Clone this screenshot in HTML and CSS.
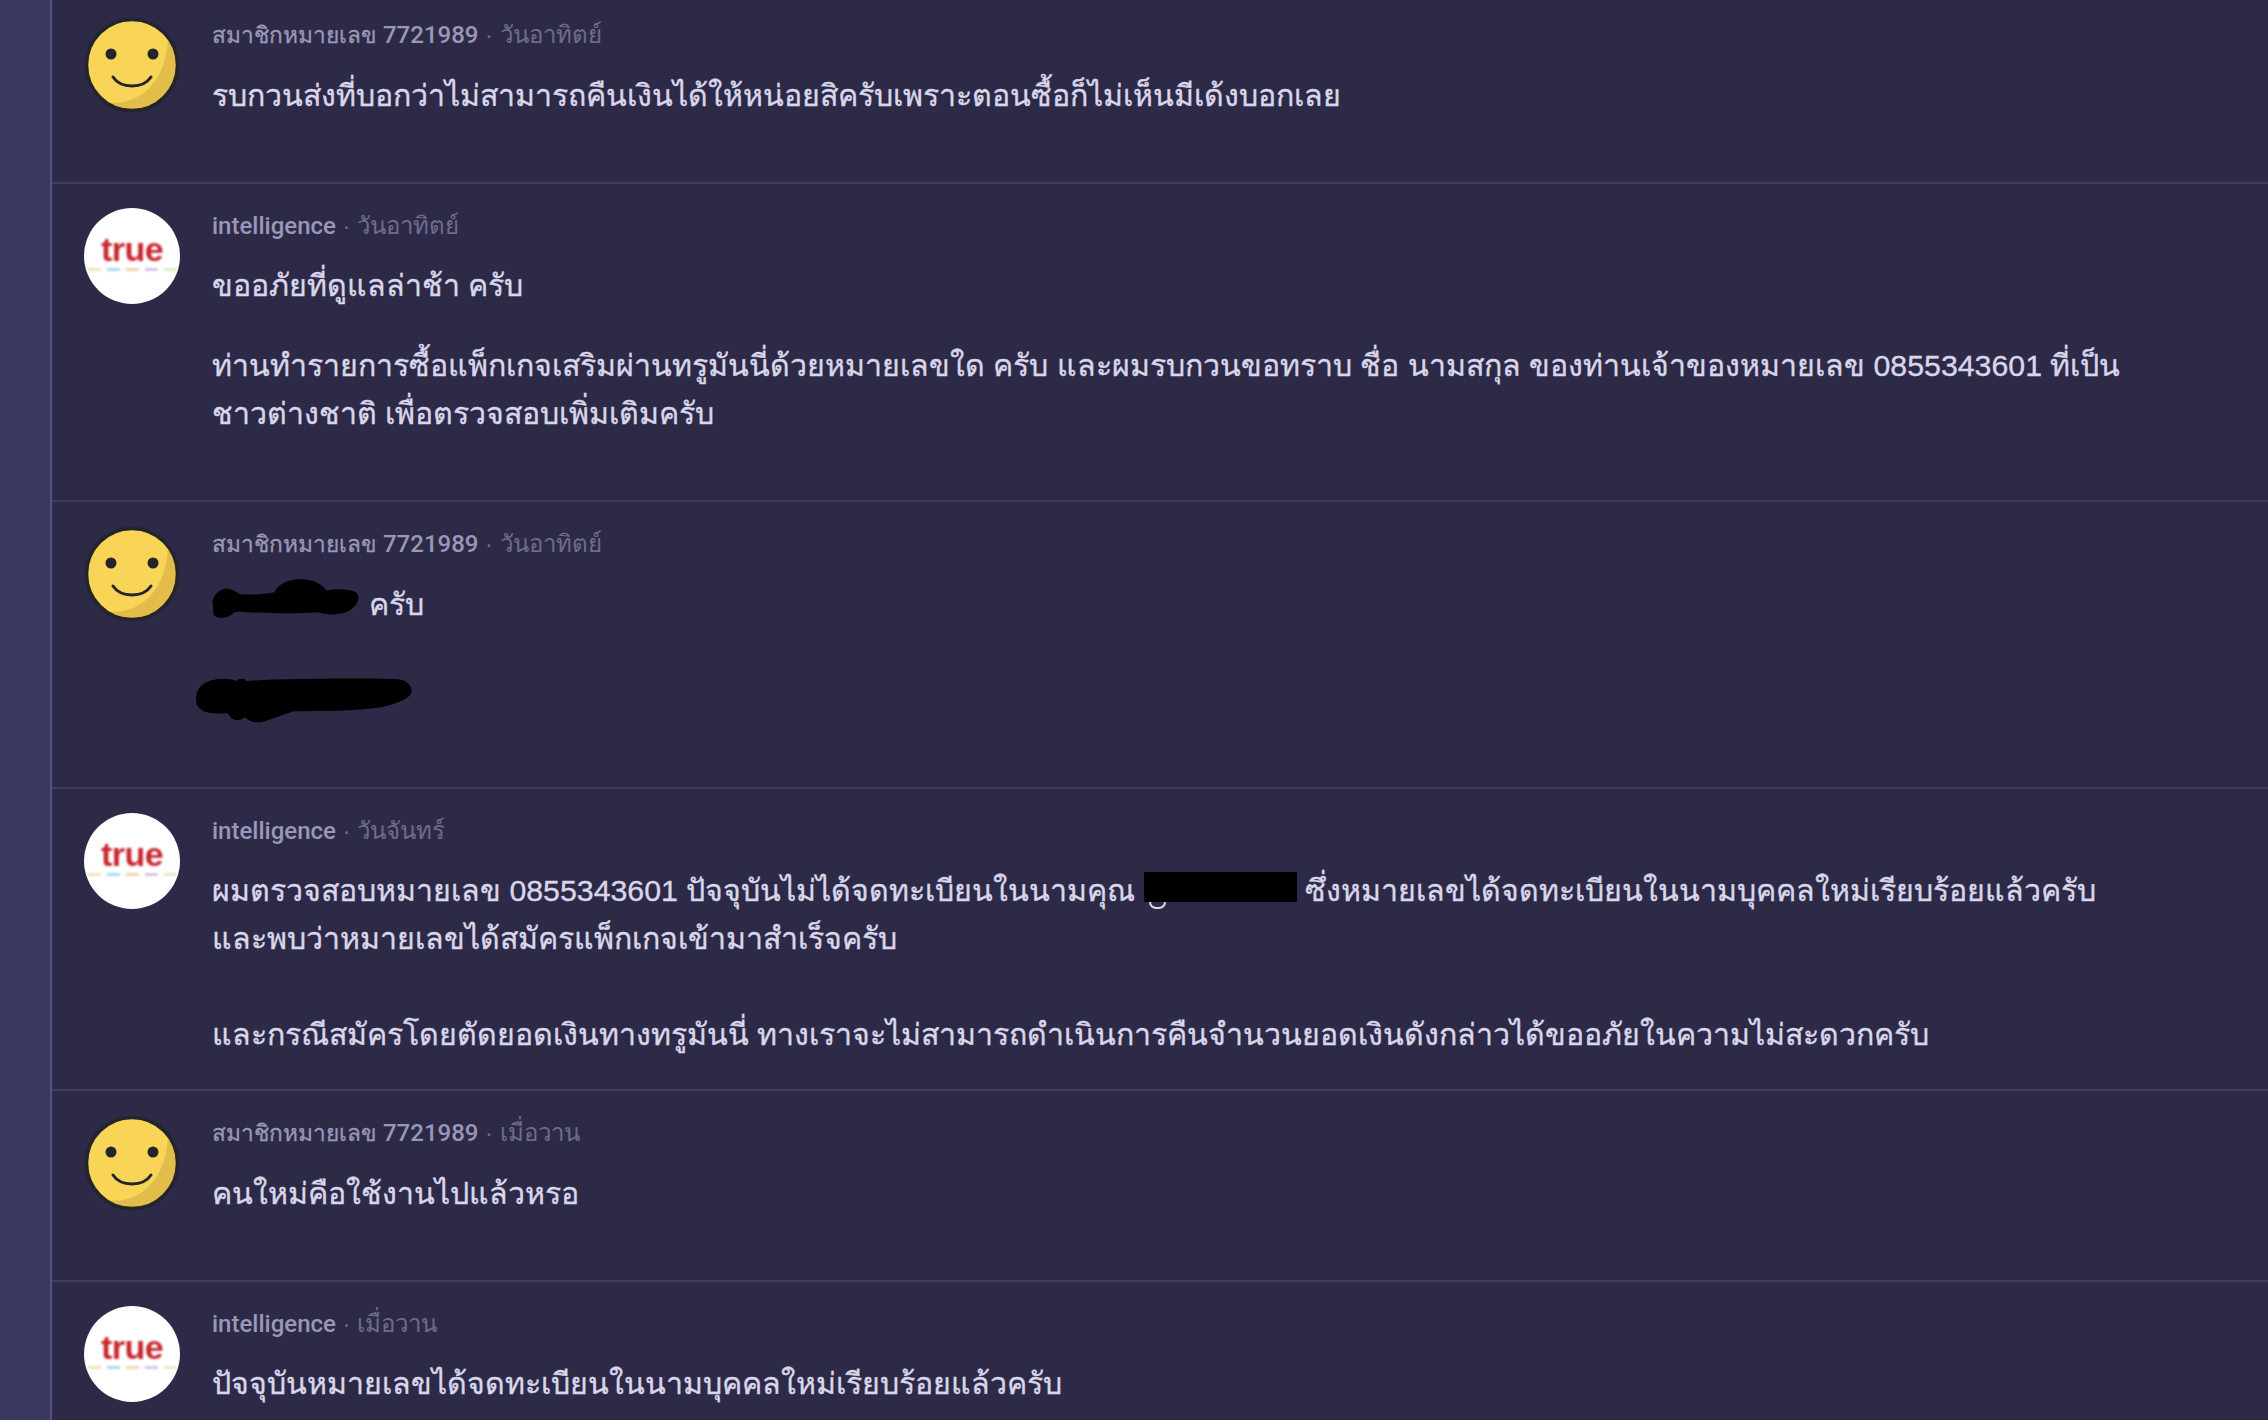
FILE: index.html
```html
<!DOCTYPE html>
<html lang="th">
<head>
    <meta charset="UTF-8">
    <meta name="viewport" content="width=device-width, initial-scale=1.0">
    <title>Comments</title>
    <link rel="stylesheet" href="styles.css">
</head>
<body>
    <div class="page">
        <div class="rail"></div>
        <div class="thread">
            <!-- member -->
            <div class="comment">
                <div class="avatar">
                    <svg class="smiley" viewBox="0 0 96 96"><use href="#smile"></use></svg>
                </div>
                <div class="content">
                    <div class="meta"><span class="author"><span class="author-th">สมาชิกหมายเลข</span> 7721989</span> · วันอาทิตย์</div>
                    <p>รบกวนส่งที่บอกว่าไม่สามารถคืนเงินได้ให้หน่อยสิครับเพราะตอนซื้อก็ไม่เห็นมีเด้งบอกเลย</p>
                </div>
            </div>

            <!-- staff -->
            <div class="comment">
                <div class="avatar true-logo">
                    <span class="true-word">true</span>
                    <span class="true-dots"><i class="d1"></i><i class="d2"></i><i class="d3"></i><i class="d4"></i><i class="d5"></i></span>
                </div>
                <div class="content">
                    <div class="meta"><span class="author">intelligence</span> · วันอาทิตย์</div>
                    <p>ขออภัยที่ดูแลล่าช้า ครับ</p>
                    <p>ท่านทำรายการซื้อแพ็กเกจเสริมผ่านทรูมันนี่ด้วยหมายเลขใด ครับ และผมรบกวนขอทราบ ชื่อ นามสกุล ของท่านเจ้าของหมายเลข 0855343601 ที่เป็นชาวต่างชาติ เพื่อตรวจสอบเพิ่มเติมครับ</p>
                </div>
            </div>

            <!-- member, redacted -->
            <div class="comment">
                <div class="avatar">
                    <svg class="smiley" viewBox="0 0 96 96"><use href="#smile"></use></svg>
                </div>
                <div class="content">
                    <div class="meta"><span class="author"><span class="author-th">สมาชิกหมายเลข</span> 7721989</span> · วันอาทิตย์</div>
                    <p><span class="scribble scribble-a"><svg viewBox="0 0 120 44" width="168" height="42" preserveAspectRatio="none"><path d="M3 30C1 22 6 12 12 11C16 11 19 14 22 17C30 18 40 17 47 15C48 8 56 1 66 1C74 2 80 5 84 13C90 11 100 11 105 15C109 20 106 30 98 36C92 39 84 39 78 36C62 38 44 37 28 36C24 35 20 35 18 36C14 43 6 44 3 38Z"></path></svg></span> ครับ</p>
                    <p class="scribble-line"><span class="scribble scribble-b"><svg viewBox="0 0 164 46" width="217" height="45" preserveAspectRatio="none"><path d="M0 22C0 8 8 1 20 1C24 1 28 1 30 3C33 0 37 0 38 3C60 1 110 0 150 1C160 1 163 8 163 14C162 20 155 25 140 30C120 34 95 34 74 34C66 37 58 42 50 45C44 46 40 44 37 40C33 44 29 44 26 40C25 37 24 36 22 36C8 37 0 34 0 22Z"></path></svg></span></p>
                </div>
            </div>

            <!-- staff -->
            <div class="comment">
                <div class="avatar true-logo">
                    <span class="true-word">true</span>
                    <span class="true-dots"><i class="d1"></i><i class="d2"></i><i class="d3"></i><i class="d4"></i><i class="d5"></i></span>
                </div>
                <div class="content">
                    <div class="meta"><span class="author">intelligence</span> · วันจันทร์</div>
                    <p class="last">ผมตรวจสอบหมายเลข 0855343601 ปัจจุบันไม่ได้จดทะเบียนในนามคุณ <span class="blackout"></span> ซึ่งหมายเลขได้จดทะเบียนในนามบุคคลใหม่เรียบร้อยแล้วครับ และพบว่าหมายเลขได้สมัครแพ็กเกจเข้ามาสำเร็จครับ<br><br>และกรณีสมัครโดยตัดยอดเงินทางทรูมันนี่ ทางเราจะไม่สามารถดำเนินการคืนจำนวนยอดเงินดังกล่าวได้ขออภัยในความไม่สะดวกครับ</p>
                </div>
            </div>

            <!-- member -->
            <div class="comment">
                <div class="avatar">
                    <svg class="smiley" viewBox="0 0 96 96"><use href="#smile"></use></svg>
                </div>
                <div class="content">
                    <div class="meta"><span class="author"><span class="author-th">สมาชิกหมายเลข</span> 7721989</span> · เมื่อวาน</div>
                    <p>คนใหม่คือใช้งานไปแล้วหรอ</p>
                </div>
            </div>

            <!-- staff -->
            <div class="comment">
                <div class="avatar true-logo">
                    <span class="true-word">true</span>
                    <span class="true-dots"><i class="d1"></i><i class="d2"></i><i class="d3"></i><i class="d4"></i><i class="d5"></i></span>
                </div>
                <div class="content">
                    <div class="meta"><span class="author">intelligence</span> · เมื่อวาน</div>
                    <p>ปัจจุบันหมายเลขได้จดทะเบียนในนามบุคคลใหม่เรียบร้อยแล้วครับ</p>
                </div>
            </div>
        </div>
    </div>

    <!-- smiley used by the member avatars -->
    <svg class="defs" width="0" height="0">
        <defs>
            <g id="smile">
                <circle cx="48" cy="48" r="45" fill="#f9d557"></circle>
                <path d="M84 21C89 29 93 38 93 48C93 73 73 93 48 93C38 93 30 90 23 85C50 90 82 70 84 21Z" fill="#e3bd4c"></path>
                <circle cx="48" cy="48" r="45.5" fill="none" stroke="#24242c" stroke-width="3.5"></circle>
                <circle cx="27" cy="37" r="5.5" fill="#24242c"></circle>
                <circle cx="69" cy="37" r="5.5" fill="#24242c"></circle>
                <path d="M29 60C37 72 59 72 67 60" fill="none" stroke="#24242c" stroke-width="3" stroke-linecap="round"></path>
            </g>
        </defs>
    </svg>
</body>
</html>
```

FILE: styles.css
```css
* {
    margin: 0;
    padding: 0;
    box-sizing: border-box;
}
html, body {
    height: 100%;
    overflow: hidden;
}
body {
    font-family: "Liberation Sans", "Noto Sans", "DejaVu Sans", sans-serif;
    background-color: #2d2a48;
    color: #d9d6ea;
}
.page {
    display: flex;
    height: 100%;
}
.rail {
    width: 50px;
    flex: none;
    background-color: #3a3761;
    border-right: 2px solid #55527c;
    box-sizing: content-box;
}
.thread {
    flex: 1;
    margin-top: -7px;
}
.comment {
    display: flex;
    padding: 24px 32px 30px;
    border-bottom: 2px solid #3f3c5c;
}
.avatar {
    width: 96px;
    height: 96px;
    flex: none;
    margin-right: 32px;
    border-radius: 50%;
}
.smiley {
    display: block;
    width: 96px;
    height: 96px;
}
.true-logo {
    background-color: #fff;
    display: flex;
    flex-direction: column;
    align-items: center;
    padding-top: 24px;
    overflow: hidden;
}
.true-word {
    font-family: "Liberation Sans", sans-serif;
    font-weight: bold;
    font-size: 34px;
    line-height: 34px;
    letter-spacing: -0.5px;
    color: #c8252e;
    filter: blur(1px);
}
.true-dots {
    display: flex;
    gap: 6px;
    margin-top: 2px;
    filter: blur(1px);
}
.true-dots i {
    display: block;
    width: 13px;
    height: 3px;
}
.d1 { background-color: #eee5b8; }
.d2 { background-color: #a5dcef; }
.d3 { background-color: #f0d6ae; }
.d4 { background-color: #d8c2ec; }
.d5 { background-color: #e6ecc0; }
.content {
    width: 1920px;
    flex: none;
}
.meta {
    font-size: 24px;
    line-height: 36px;
    color: #6f6c8e;
    margin-bottom: 18px;
}
.author {
    font-family: Roboto, "Liberation Sans", sans-serif;
    font-weight: 500;
    color: #9a97b8;
}
.author-th {
    font-size: 22.7px;
    -webkit-text-stroke: 0.3px #9a97b8;
}
.content p {
    font-size: 30.3px;
    line-height: 48px;
    margin-bottom: 32px;
    -webkit-text-stroke: 0.35px #d9d6ea;
}
.content p.last {
    margin-bottom: 0;
}
.scribble {
    display: inline-block;
    position: relative;
    width: 149px;
    height: 30px;
    vertical-align: baseline;
}
.scribble svg {
    position: absolute;
    fill: #000;
}
.scribble-a svg {
    left: -3px;
    top: -7px;
}
.content p.scribble-line {
    height: 48px;
    margin-top: 45px;
    margin-bottom: 35px;
}
.scribble-b {
    width: 164px;
}
.scribble-b svg {
    left: -16px;
    top: 0;
}
.blackout {
    display: inline-block;
    position: relative;
    width: 153px;
    height: 30px;
    background-color: #000;
    border-radius: 1px;
    vertical-align: -1px;
}
.blackout::after {
    content: "";
    position: absolute;
    left: 5px;
    top: 30px;
    width: 13px;
    height: 5px;
    border: 2px solid #d9d6ea;
    border-top: none;
    border-radius: 0 0 8px 8px;
}
.defs {
    position: absolute;
}
```
